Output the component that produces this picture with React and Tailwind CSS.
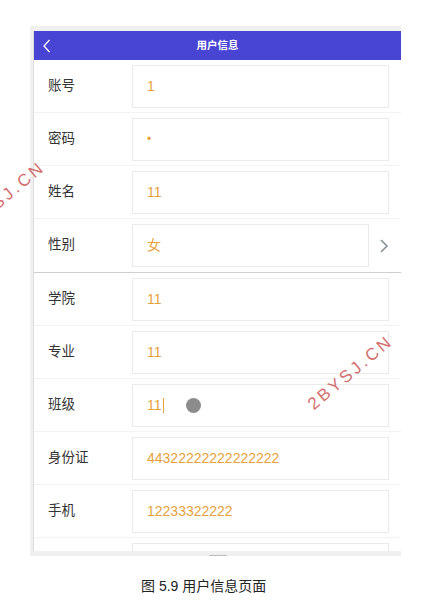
import React from "react";

const rows = [
  { label: "账号", value: "1" },
  { label: "密码", value: "•", small: true },
  { label: "姓名", value: "11" },
  { label: "性别", value: "女", select: true },
  { label: "学院", value: "11" },
  { label: "专业", value: "11" },
  { label: "班级", value: "11", cursor: true },
  { label: "身份证", value: "44322222222222222" },
  { label: "手机", value: "12233322222" },
  { label: "", value: "" },
];

function Row({ r }) {
  return (
    <div
      className={
        "relative flex items-center h-[53px] shrink-0 border-b " +
        (r.select ? "border-[#cfcfcf] h-[54px]" : "border-[#f3f3f3]")
      }
    >
      <div className="w-[98px] pl-[14px] text-[13.5px] text-[#333]">{r.label}</div>
      <div
        className={
          "flex-1 h-[43px] border border-[#ebebeb] flex items-center pl-[14px] text-[14px] text-[#e6a23c] " +
          (r.select ? "mr-0" : "mr-[12px]")
        }
      >
        <span className={r.small ? "text-[12px] leading-none" : ""}>{r.value}</span>
        {r.cursor && <span className="ml-[1px] w-px h-[15px] bg-[#e6a23c]" />}
        {r.cursor && (
          <span className="ml-[22px] w-[15px] h-[15px] rounded-full bg-[#8c8c8c]" />
        )}
      </div>
      {r.select && (
        <div className="w-[32px] flex justify-center">
          <svg width="10" height="16" viewBox="0 0 10 16" className="ml-[-2px]">
            <path d="M2 2 L8 8 L2 14" fill="none" stroke="#8a9199" strokeWidth="1.6" />
          </svg>
        </div>
      )}
    </div>
  );
}

function Watermark({ className }) {
  return (
    <div
      className={
        "absolute pointer-events-none text-[17px] font-normal tracking-[3px] text-[#cf6060] opacity-90 -rotate-[40deg] whitespace-nowrap " +
        className
      }
      style={{ fontFamily: '"Liberation Sans", Arial, sans-serif' }}
    >
      2BYSJ.CN
    </div>
  );
}

export default function App() {
  return (
    <div
      className="relative w-[446px] h-[612px] bg-white overflow-hidden"
      style={{ fontFamily: '"Liberation Sans", "Noto Sans CJK SC", sans-serif' }}
    >
      <div className="relative ml-[30px] mt-[26px] w-[371px] h-[530px] bg-[#f0f0f0] pt-[5px] pl-[3px] pb-[5px] flex flex-col">
        <div className="flex-1 flex flex-col bg-white border-l border-[#dcdcdc] overflow-hidden">
          <div className="relative h-[29px] shrink-0 bg-[#4845d4] flex items-center justify-center">
            <svg width="10" height="14" viewBox="0 0 10 14" className="absolute left-[8px] top-[8px]">
              <path d="M7.5 1 L2 7 L7.5 13" fill="none" stroke="#ffffff" strokeWidth="1.3" />
            </svg>
            <span className="text-white text-[10.5px] font-bold">用户信息</span>
          </div>
          {rows.map((r, i) => (
            <Row key={i} r={r} />
          ))}
        </div>
        <div className="absolute left-[179px] bottom-0 w-[18px] h-[1px] bg-[#bdbdbd]" />
      </div>
      <div className="ml-[141px] mt-[20px] text-[14px] text-[#222]">图 5.9 用户信息页面</div>
      <Watermark className="left-[-50px] top-[186px]" />
      <Watermark className="left-[298px] top-[360px]" />
    </div>
  );
}
